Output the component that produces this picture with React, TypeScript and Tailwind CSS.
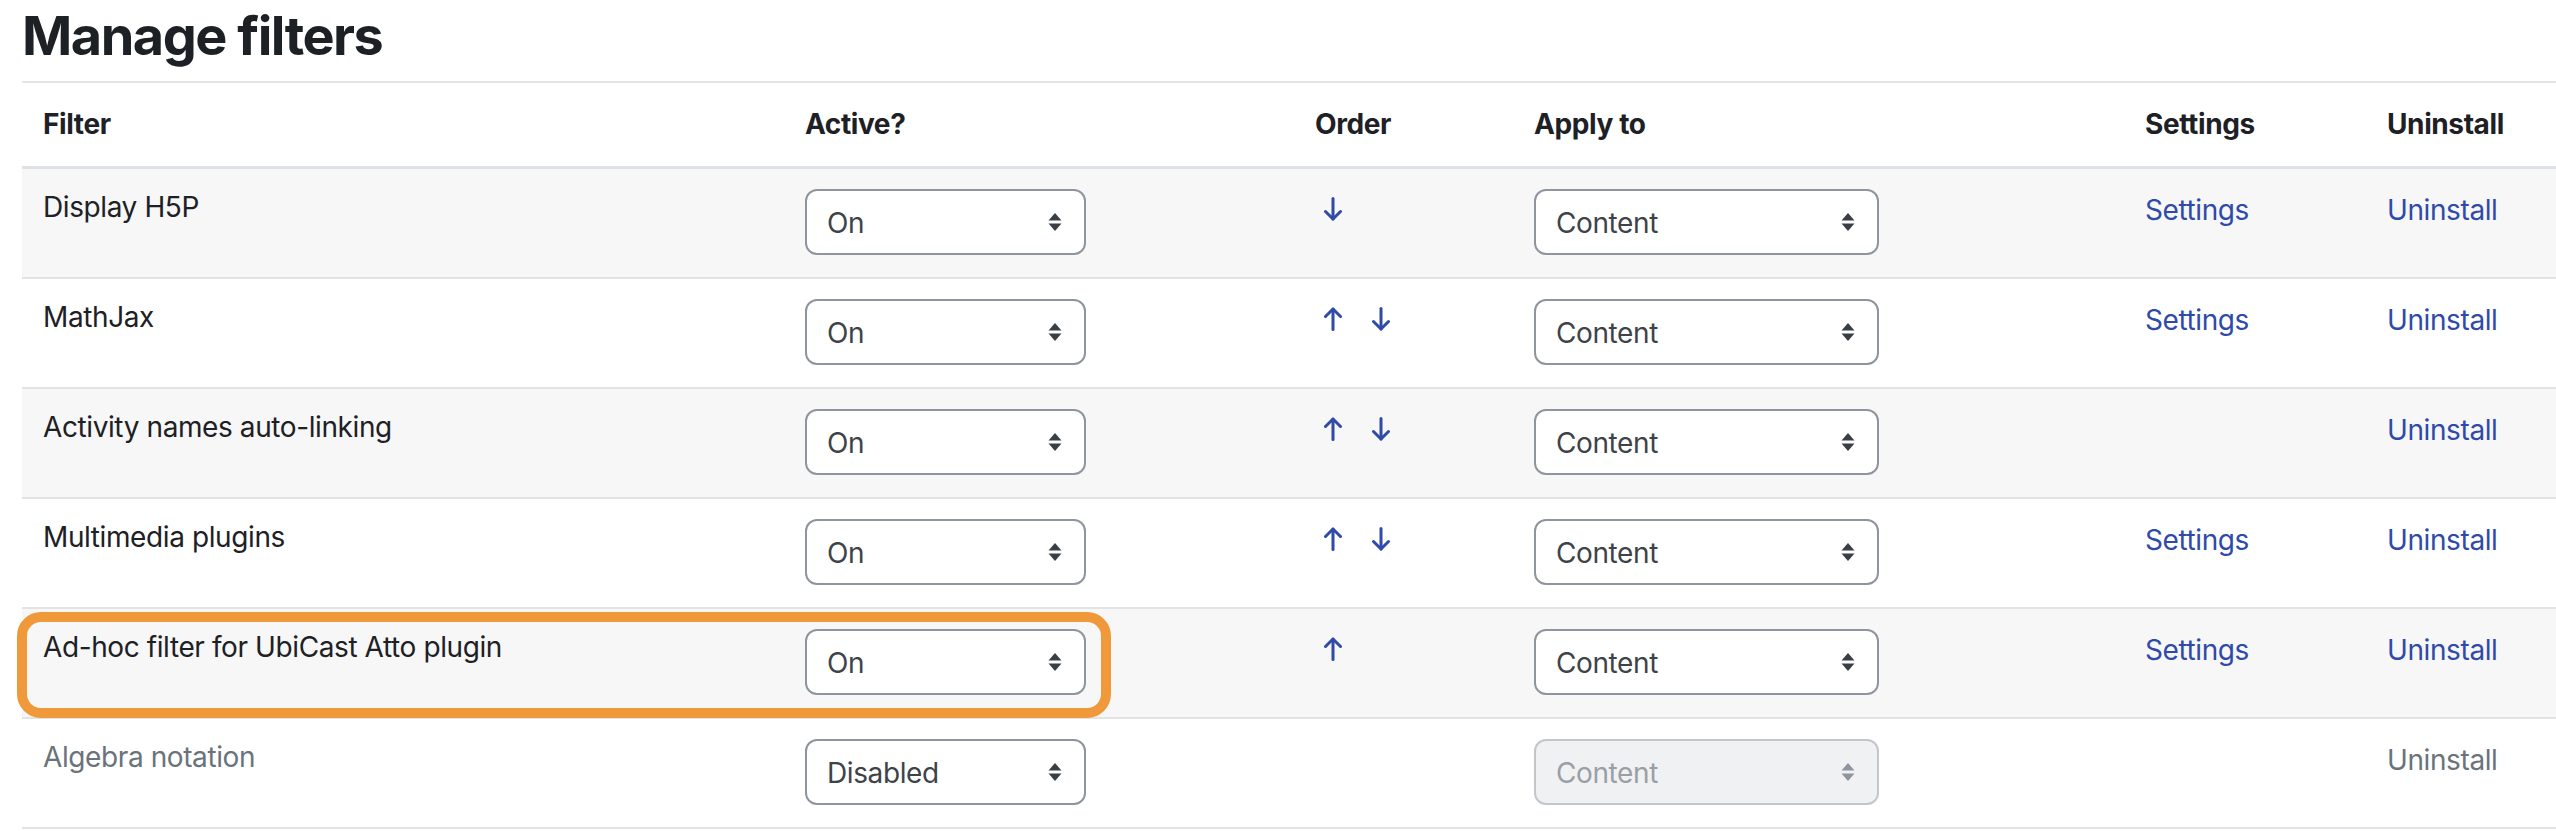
import React from 'react';

type Row = {
  name: string;
  active: string;
  up: boolean;
  down: boolean;
  settings: boolean;
  disabled?: boolean;
  highlight?: boolean;
};

const rows: Row[] = [
  { name: 'Display H5P', active: 'On', up: false, down: true, settings: true },
  { name: 'MathJax', active: 'On', up: true, down: true, settings: true },
  { name: 'Activity names auto-linking', active: 'On', up: true, down: true, settings: false },
  { name: 'Multimedia plugins', active: 'On', up: true, down: true, settings: true },
  { name: 'Ad-hoc filter for UbiCast Atto plugin', active: 'On', up: true, down: false, settings: true, highlight: true },
  { name: 'Algebra notation', active: 'Disabled', up: false, down: false, settings: false, disabled: true },
];

function Arrow({ dir }: { dir: 'up' | 'down' }) {
  return (
    <svg width="20" height="24" viewBox="0 0 20 24" fill="none" stroke="#2f4aa8" strokeWidth="3" strokeLinecap="round" strokeLinejoin="round">
      {dir === 'up' ? (
        <>
          <path d="M10 22.5V2" />
          <path d="M2.5 9.5L10 2l7.5 7.5" />
        </>
      ) : (
        <>
          <path d="M10 1.5V22" />
          <path d="M2.5 14.5L10 22l7.5-7.5" />
        </>
      )}
    </svg>
  );
}

function Select({ value, width, disabled }: { value: string; width: string; disabled?: boolean }) {
  return (
    <div
      className={`${width} h-[66px] rounded-[12px] border-2 flex items-center justify-between pl-[20px] pr-[22px] text-[28px] ${
        disabled ? 'bg-[#f0f1f3] border-[#c3c6cb] text-[#9a9fa6]' : 'bg-white border-[#8f959e] text-[#3e4348]'
      }`}
    >
      <span className="pt-[2px]">{value}</span>
      <svg width="14" height="18" viewBox="0 0 14 18" fill={disabled ? '#8f959e' : '#3a3f45'}>
        <path d="M7 0L13.5 7.5H0.5Z" />
        <path d="M7 18L13.5 10.5H0.5Z" />
      </svg>
    </div>
  );
}

export default function App() {
  return (
    <div className="w-[2556px] h-[831px] overflow-hidden bg-white text-[#1d2125] font-['Inter',sans-serif]">
      <h1 className="pl-[22px] pt-[3px] text-[54px] font-bold leading-[65px] tracking-[-1.5px] mb-[13px]">Manage filters</h1>
      <table className="ml-[22px] w-[2560px] table-fixed border-collapse border-t-2 border-[#e3e5e8] text-[28px] tracking-[-0.4px]">
        <colgroup>
          <col className="w-[762px]" />
          <col className="w-[510px]" />
          <col className="w-[219px]" />
          <col className="w-[611px]" />
          <col className="w-[242px]" />
          <col />
        </colgroup>
        <thead>
          <tr className="border-b-[3px] border-[#dee2e6]">
            {['Filter', 'Active?', 'Order', 'Apply to', 'Settings', 'Uninstall'].map((h) => (
              <th key={h} className="h-[85px] px-[21px] text-left font-bold align-middle">
                {h}
              </th>
            ))}
          </tr>
        </thead>
        <tbody>
          {rows.map((r, i) => (
            <tr key={r.name} className={`border-b-2 border-[#e2e3e5] ${i % 2 === 0 ? 'bg-[#f7f7f7]' : 'bg-white'}`}>
              <td className="px-[21px] pt-[20px] pb-[22px] align-top relative">
                {r.highlight && (
                  <div className="absolute left-[-5px] top-[3px] w-[1094px] h-[106px] rounded-[24px] border-[10px] border-[#f0993a] pointer-events-none" />
                )}
                <div className={`leading-[36px] ${r.disabled ? 'text-[#6a737b]' : ''}`}>{r.name}</div>
              </td>
              <td className="px-[21px] pt-[20px] pb-[22px] align-top">
                <Select value={r.active} width="w-[281px]" />
              </td>
              <td className="px-[21px] pt-[28px] pb-[22px] align-top">
                <div className="flex items-start gap-[28px] pl-[8px]">
                  {r.up && <Arrow dir="up" />}
                  {r.down && <Arrow dir="down" />}
                </div>
              </td>
              <td className="px-[21px] pt-[20px] pb-[22px] align-top">
                <Select value="Content" width="w-[345px]" disabled={r.disabled} />
              </td>
              <td className="px-[21px] pt-[20px] pb-[22px] align-top">
                {r.settings && <span className="leading-[36px] text-[#2f4aa8]">Settings</span>}
              </td>
              <td className="px-[21px] pt-[20px] pb-[22px] align-top">
                <span className={`leading-[36px] ${r.disabled ? 'text-[#6a737b]' : 'text-[#2f4aa8]'}`}>Uninstall</span>
              </td>
            </tr>
          ))}
        </tbody>
      </table>
    </div>
  );
}
